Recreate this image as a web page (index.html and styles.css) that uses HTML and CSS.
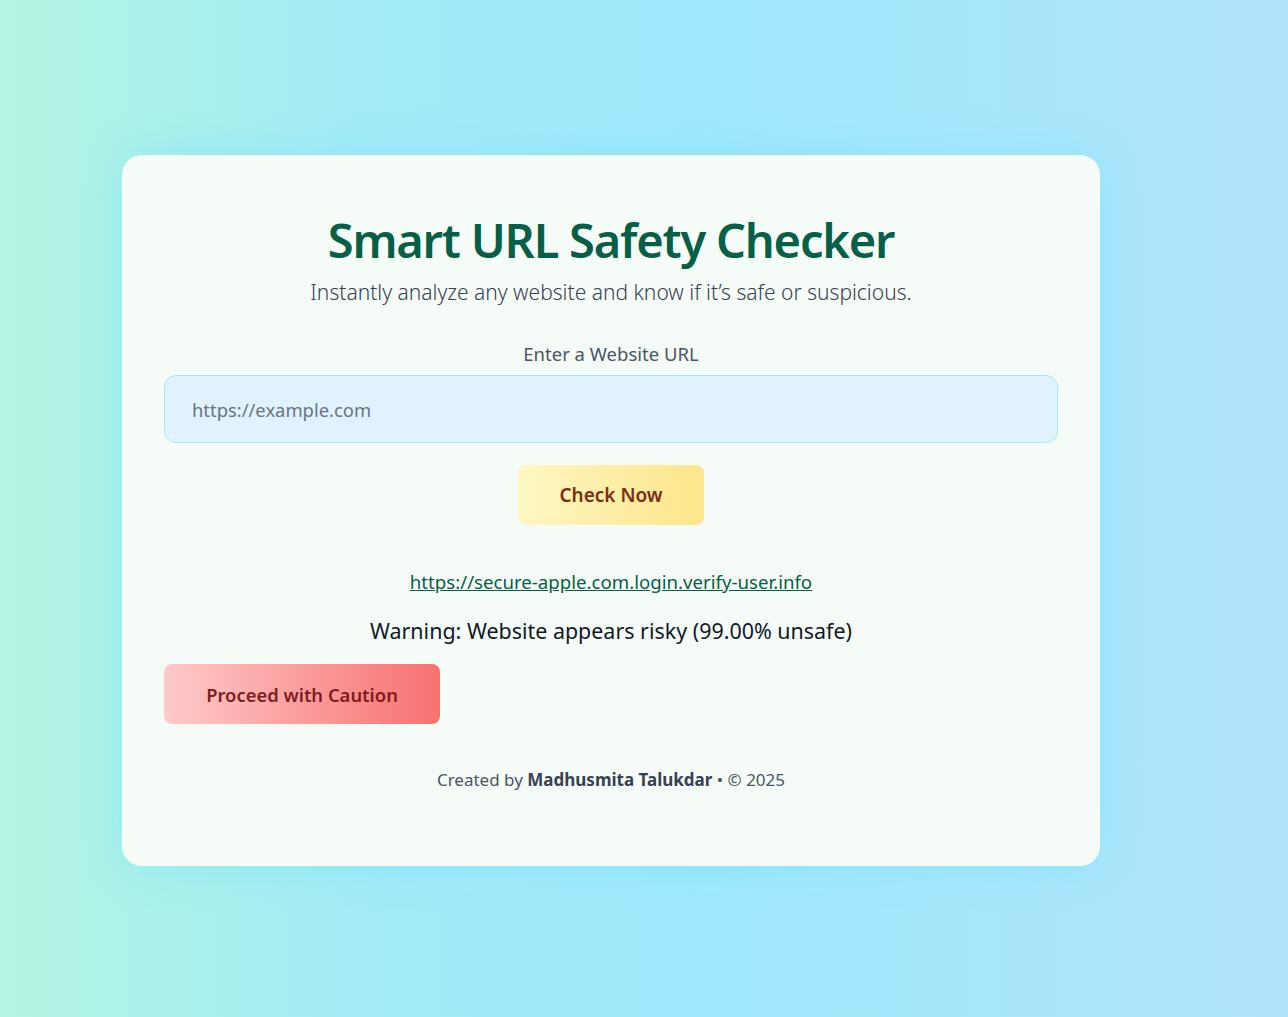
FILE: index.html
```html
<!DOCTYPE html>
<html lang="en">
<head>
<meta charset="utf-8">
<title>Smart URL Safety Checker</title>
<link rel="stylesheet" href="styles.css">
</head>
<body>
<main class="page">
  <section class="card">
    <h1 class="title">Smart URL Safety Checker</h1>
    <p class="subtitle">Instantly analyze any website and know if it’s safe or suspicious.</p>
    <label class="label" for="url">Enter a Website URL</label>
    <input class="url-input" id="url" type="text" placeholder="https://example.com">
    <div class="actions">
      <button class="check-btn" type="button">Check Now</button>
    </div>
    <div class="result">
      <a class="result-link" href="#">https://secure-apple.com.login.verify-user.info</a>
      <p class="warning">Warning: Website appears risky (99.00% unsafe)</p>
      <button class="caution-btn" type="button">Proceed with Caution</button>
    </div>
    <footer class="footer">Created by <strong>Madhusmita Talukdar</strong> • © 2025</footer>
  </section>
</main>
</body>
</html>
```

FILE: styles.css
```css
* { box-sizing: border-box; }

html, body {
  margin: 0;
  padding: 0;
}

body {
  font-family: "Noto Sans", "Open Sans", sans-serif;
  background: linear-gradient(to right, #b3f5e2 0%, #a2ebf8 30%, #9fe8fc 55%, #b2e5fb 100%);
  min-height: 100vh;
}

.page {
  min-height: 100vh;
  display: flex;
  align-items: center;
  padding: 4px 0 0 122px;
}

.card {
  width: 978px;
  height: 711px;
  background: #f5fcf8;
  border-radius: 20px;
  padding: 55px 42px 0;
  box-shadow: 0 0 40px rgba(110, 225, 250, 0.45);
  display: flex;
  flex-direction: column;
  align-items: center;
}

.title {
  margin: 0;
  font-size: 47px;
  line-height: 60px;
  font-weight: 600;
  color: #065f46;
  letter-spacing: -1.2px;
}

.subtitle {
  margin: 7px 0 0;
  font-size: 21px;
  line-height: 30px;
  font-weight: 300;
  color: #374151;
}

.label {
  margin-top: 35px;
  font-size: 18.5px;
  line-height: 24px;
  color: #4b5563;
}

.url-input {
  margin-top: 9px;
  width: 100%;
  height: 68px;
  border: 1px solid #a5e8f7;
  border-radius: 12px;
  background: #e0f2fe;
  padding: 0 27px;
  font-family: inherit;
  font-size: 18.4px;
  color: #1f2937;
  outline: none;
}

.url-input::placeholder {
  color: #6b7280;
}

.actions {
  margin-top: 22px;
  display: flex;
  justify-content: center;
}

.check-btn {
  width: 186px;
  height: 60px;
  border: none;
  border-radius: 8px;
  background: linear-gradient(to right, #fef7c3, #fde68a);
  color: #7c2d12;
  font-family: inherit;
  font-size: 19px;
  font-weight: 600;
}

.result {
  width: 100%;
  margin-top: 44px;
  display: flex;
  flex-direction: column;
  align-items: center;
}

.result-link {
  font-size: 18.65px;
  line-height: 26px;
  color: #065f46;
  text-decoration: underline;
}

.warning {
  margin: 21px 0 0;
  font-size: 21.45px;
  line-height: 30px;
  color: #111827;
}

.caution-btn {
  align-self: flex-start;
  margin-top: 18px;
  width: 276px;
  height: 60px;
  border: none;
  border-radius: 8px;
  background: linear-gradient(to right, #fecaca, #f87171);
  color: #7f1d1d;
  font-family: inherit;
  font-size: 18.4px;
  font-weight: 600;
}

.footer {
  margin-top: 44px;
  font-size: 17px;
  line-height: 24px;
  color: #4b5563;
}

.footer strong {
  font-weight: 700;
  color: #374151;
}
```
